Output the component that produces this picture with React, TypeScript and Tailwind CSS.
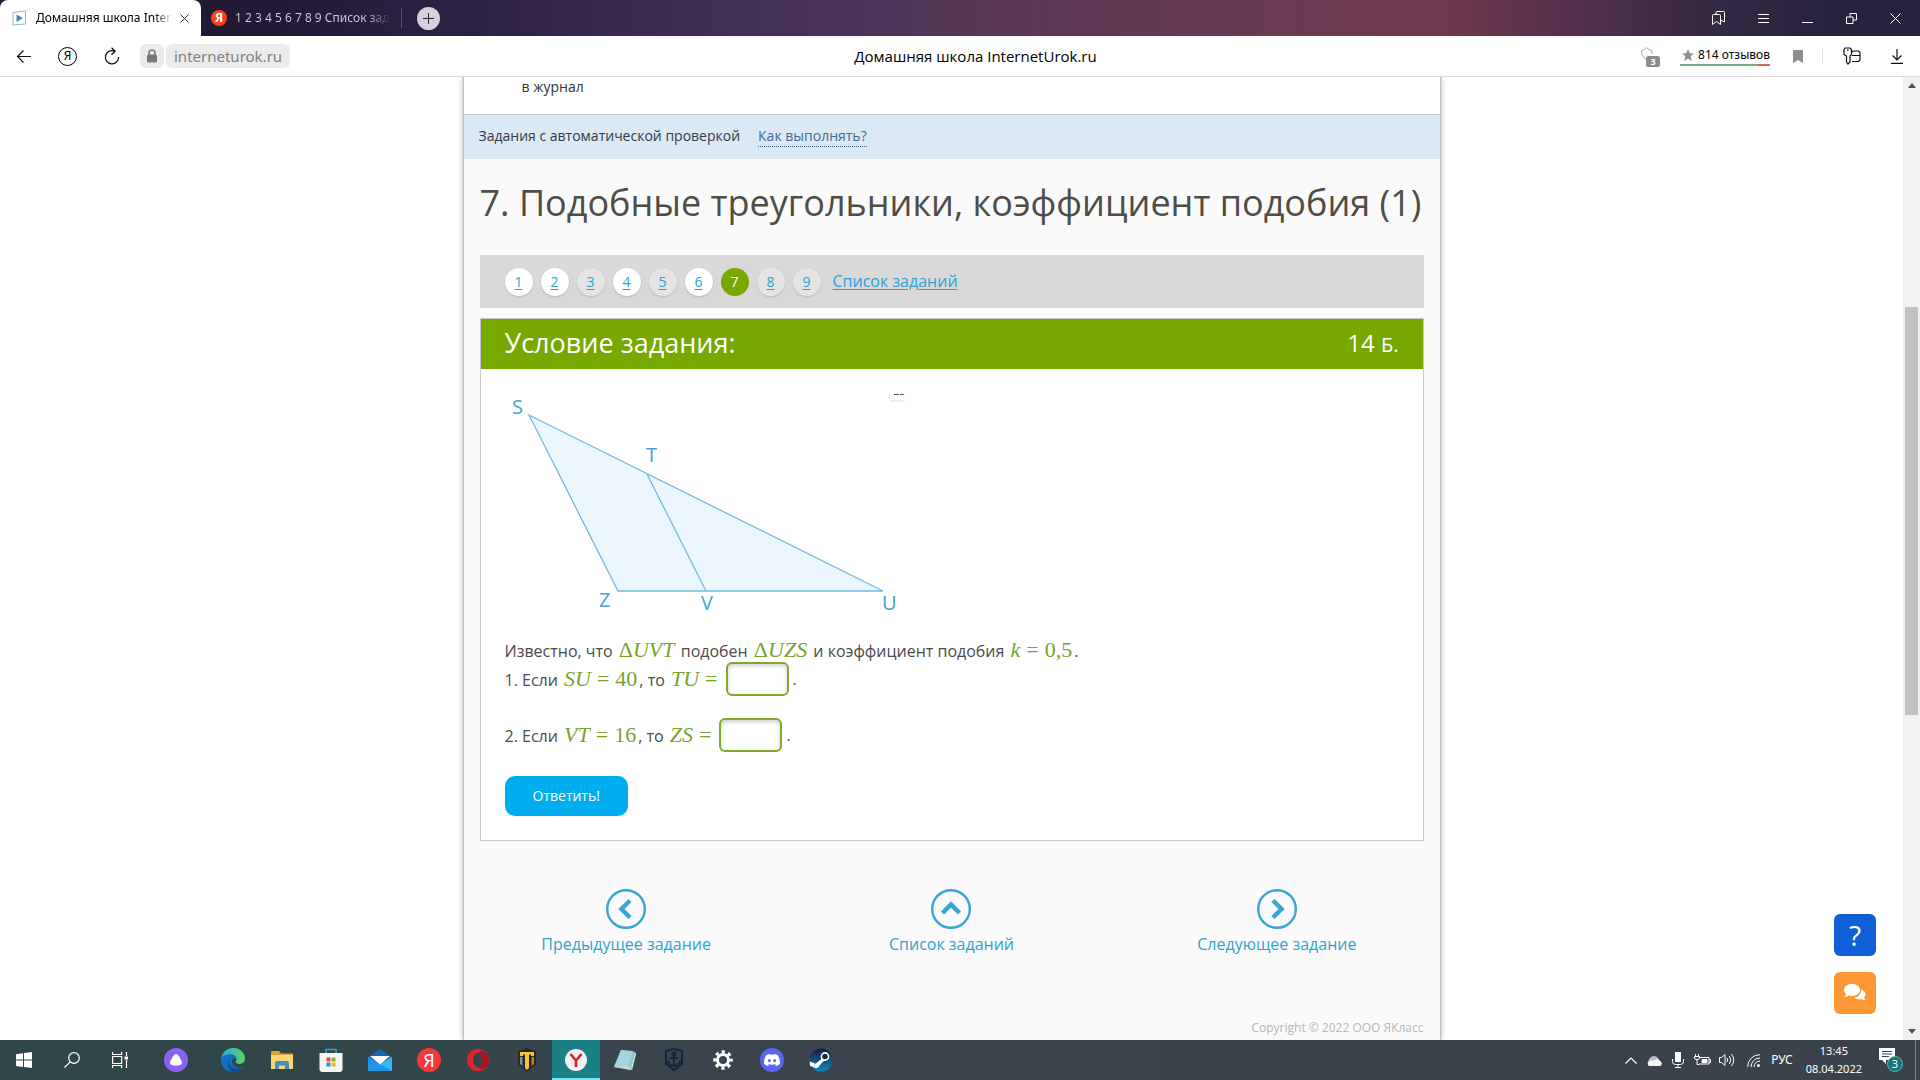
import type { ReactNode } from 'react'
import { SiDiscord } from 'react-icons/si'

const SANS = "font-['Open_Sans','Noto_Sans',sans-serif]"
const UI = "font-['Noto_Sans','Open_Sans',sans-serif]"

/* ---------- Browser window ---------- */

function TabStrip() {
    return (
        <div className="flex h-9 shrink-0 items-stretch bg-[linear-gradient(90deg,#1e1730_0%,#231a36_15%,#2c2142_24%,#3b2a50_33%,#48345a_44%,#5a3853_53%,#693a52_66%,#70384f_75%,#53304a_82%,#382a45_88%,#28223c_95%,#28223c_100%)] text-white">
            <div className="flex w-[201px] items-center gap-2 rounded-t-lg bg-white pr-3 pl-3 text-black">
                <svg viewBox="0 0 16 16" className="size-4 shrink-0">
                    <path d="M1 2.5 13.5 1v13L1 15z" fill="#fff" stroke="#8fb9d3" />
                    <path d="M4.500 4.500v7.500l6.500-4z" fill="#4a86ae" />
                </svg>
                <span className="flex-1 overflow-hidden bg-linear-to-r from-black from-85% to-white bg-clip-text text-xs whitespace-nowrap text-transparent">
                    Домашняя школа InternetUrok
                </span>
                <button aria-label="Закрыть вкладку">
                    <svg viewBox="0 0 10 10" className="size-[9px]" stroke="#222" fill="none">
                        <path d="M.5.5l9 9M9.500.500l-9 9" />
                    </svg>
                </button>
            </div>
            <div className="flex w-[200px] items-center gap-2 pl-[10px] text-xs">
                <span className="flex size-4 shrink-0 items-center justify-center rounded-full bg-[#fc3f1d] text-xs font-bold">Я</span>
                <span className="w-[155px] overflow-hidden bg-linear-to-r from-[#d3cdda] from-85% to-transparent bg-clip-text whitespace-nowrap text-transparent">
                    1 2 3 4 5 6 7 8 9 Список заданий
                </span>
            </div>
            <div className="flex items-center">
                <span className="h-5 w-px bg-[#5a5068]" />
                <button aria-label="Новая вкладка" className="ml-[15px] flex size-[23px] items-center justify-center rounded-full bg-[#d6d0da]">
                    <svg viewBox="0 0 11 11" className="size-[11px]" stroke="#2a2038">
                        <path d="M5.500 0v11M0 5.500h11" />
                    </svg>
                </button>
            </div>
            <div className="ml-auto flex items-center gap-[33px] pr-[19px]">
                <button aria-label="Закладки">
                    <svg viewBox="0 0 13 14" className="h-[14px] w-[13px]" fill="none" stroke="#fff">
                        <path d="M.5 4.500q0-1 1-1h6q1 0 1 1v9l-4-3-4 3zM4 3V1.500q0-1 1-1h6.500q1 0 1 1V11l-4-2" />
                    </svg>
                </button>
                <button aria-label="Меню">
                    <svg viewBox="0 0 11 11" className="size-[11px]" stroke="#fff">
                        <path d="M0 1.500h11M0 5.500h11M0 9.500h11" />
                    </svg>
                </button>
                <button aria-label="Свернуть">
                    <svg viewBox="0 0 11 11" className="size-[11px]" stroke="#fff">
                        <path d="M0 9.500h11" />
                    </svg>
                </button>
                <button aria-label="Развернуть">
                    <svg viewBox="0 0 11 11" className="size-[11px]" fill="none" stroke="#fff">
                        <path d="M.5 4h6.500v6.500H.5zM4 4V.5h6.500V7H7" />
                    </svg>
                </button>
                <button aria-label="Закрыть">
                    <svg viewBox="0 0 11 11" className="size-[11px]" stroke="#fff">
                        <path d="M.5.500l10 10M10.500.500l-10 10" />
                    </svg>
                </button>
            </div>
        </div>
    )
}

function AddressBar() {
    return (
        <div className="grid h-[41px] shrink-0 grid-cols-[1fr_auto_1fr] items-center border-b border-[#dcdcdc] bg-white pr-[17px] pl-4">
            <div className="flex items-center">
                <button aria-label="Назад">
                    <svg viewBox="0 0 16 16" className="size-4" fill="none" stroke="#111" strokeWidth="1.200">
                        <path d="M15 8.500H1.500M7.500 2.500l-6 6 6 6" />
                    </svg>
                </button>
                <button aria-label="Яндекс" className="ml-[26px] flex size-[19px] items-center justify-center rounded-full border border-black text-xs">
                    Я
                </button>
                <button aria-label="Обновить" className="ml-[27px]">
                    <svg viewBox="0 0 16 18" className="h-[18px] w-4" fill="none" stroke="#111" strokeWidth="1.300">
                        <path d="M10.500 4.200A6.600 6.600 0 1 0 14.600 10M7.500.800l3.600 3.400-3.600 3.600" />
                    </svg>
                </button>
                <span className="ml-5 flex h-6 w-6 items-center justify-center rounded-md bg-[#ebebeb]">
                    <svg viewBox="0 0 12 14" className="h-[14px] w-3">
                        <path d="M3 6V4a3 3 0 0 1 6 0v2" fill="none" stroke="#777" strokeWidth="1.500" />
                        <rect x="1" y="5.500" width="10" height="8" rx="1.500" fill="#777" />
                    </svg>
                </span>
                <span className="ml-[2px] flex h-6 items-center rounded-md bg-[#ebebeb] px-2 text-[15px] text-[#808080]">interneturok.ru</span>
            </div>
            <span className={`ml-8 text-[15px] text-black ${SANS}`}>Домашняя школа InternetUrok.ru</span>
            <div className="flex items-center justify-end">
                <svg viewBox="0 0 20 21" className="h-[21px] w-5">
                    <path d="M9 14.500C4 13 1.500 9 1.500 4.500 3.500 4.300 5 3 6.500 1.500 8 3 10 4.300 12 4.500V8" fill="none" stroke="#a8a8a8" />
                    <rect x="6" y="10" width="14" height="11" rx="2.500" fill="#8b8b8b" />
                    <text x="13" y="19" fontSize="9" fontWeight="bold" textAnchor="middle" fill="#fff">3</text>
                </svg>
                <a href="#reviews" className="ml-5 flex flex-col whitespace-nowrap">
                    <span className="flex items-center gap-1 pl-[2px] text-xs leading-[18px]">
                        <svg viewBox="0 0 24 24" className="size-3" fill="#8a8f94">
                            <path d="M12 0l3.500 8.500 8.500.500-6.700 5.700L19.500 24 12 18.800 4.500 24l2.200-9.300L0 9l8.500-.5z" />
                        </svg>
                        814 отзывов
                    </span>
                    <span className="flex h-[2px]">
                        <span className="w-[87%] bg-[#6fae86]" />
                        <span className="flex-1 bg-[#d9675a]" />
                    </span>
                </a>
                <svg viewBox="0 0 10 13" className="ml-[23px] h-[13px] w-[10px]" fill="#8e8e8e">
                    <path d="M0 1q0-1 1-1h8q1 0 1 1v12L5 10l-5 3z" />
                </svg>
                <span className="ml-[19px] h-4 w-px bg-[#dedede]" />
                <button aria-label="Пароли" className="ml-5">
                    <svg viewBox="0 0 18 18" className="size-[18px]" fill="none" stroke="#111" strokeWidth="1.200">
                        <path d="M2 1h5l1.500 1.500v5L7 9v6l-2 2-1.500-2V9L1 7.500v-5zM4 3.200h1.500M9 5l1-1h5.500l1.500 1.500V13l-1.500 1.500H9M9 8.500h8" />
                    </svg>
                </button>
                <button aria-label="Загрузки" className="ml-[30px]">
                    <svg viewBox="0 0 12 15" className="h-[15px] w-3" fill="none" stroke="#111" strokeWidth="1.200">
                        <path d="M6 0v11M1.500 6.500L6 11l4.500-4.500M0 14.300h12" />
                    </svg>
                </button>
            </div>
        </div>
    )
}

function Scrollbar() {
    return (
        <div className="flex w-[17px] shrink-0 flex-col items-center bg-[#f1f1f1] py-[6px]">
            <svg viewBox="0 0 8 5" className="h-[5px] w-2" fill="#505050">
                <path d="M0 5l4-5 4 5z" />
            </svg>
            <div className="grow-[219]" />
            <div className="w-[13px] grow-[408] bg-[#c1c1c1]" />
            <div className="grow-[314]" />
            <svg viewBox="0 0 8 5" className="h-[5px] w-2" fill="#505050">
                <path d="M0 0l4 5 4-5z" />
            </svg>
        </div>
    )
}

/* ---------- Page ---------- */

const tasks = [
    { n: 1, done: true },
    { n: 2, done: true },
    { n: 3, done: false },
    { n: 4, done: true },
    { n: 5, done: false },
    { n: 6, done: true },
    { n: 7, current: true },
    { n: 8, done: false },
    { n: 9, done: false },
]

function TaskPager() {
    return (
        <nav className="flex h-[53px] items-center gap-2 bg-[#d9d9d9] px-[25px] text-[#2e9fd4]">
            {tasks.map((t) =>
                t.current ? (
                    <span key={t.n} className="flex size-7 items-center justify-center rounded-full bg-[#76a800] text-sm text-white">
                        {t.n}
                    </span>
                ) : (
                    <a
                        key={t.n}
                        href={`#task-${t.n}`}
                        className={`flex size-7 items-center justify-center rounded-full text-sm underline underline-offset-2 shadow-[0_1px_2px_rgba(0,0,0,0.15)] ${t.done ? 'bg-white' : 'bg-[#e4e4e4]'}`}
                    >
                        {t.n}
                    </a>
                ),
            )}
            <a href="#list" className="ml-1 pb-[2px] text-base underline underline-offset-2">
                Список заданий
            </a>
        </nav>
    )
}

function Triangle() {
    return (
        <svg viewBox="0 -4 400 224" className="h-[224px] w-[400px]" role="img" aria-label="Треугольник SUZ">
            <path d="M24 20L378 196H113z" fill="#ebf7fc" stroke="#6fbbe2" strokeWidth="1.300" />
            <path d="M142 79l59 117" stroke="#6fbbe2" strokeWidth="1.300" />
            <g fontSize="20" fill="#45a3d9">
                <text x="7" y="19">S</text>
                <text x="141" y="67">T</text>
                <text x="94" y="212">Z</text>
                <text x="196" y="215">V</text>
                <text x="377" y="215">U</text>
            </g>
        </svg>
    )
}

function M({ children }: { children: ReactNode }) {
    return <span className="mx-[2px] font-['Liberation_Serif',serif] text-[22px] leading-none text-[#76a32a]">{children}</span>
}

function Eq() {
    return <span className="mx-[6px]">=</span>
}

function Answer({ label }: { label: string }) {
    return (
        <input
            type="text"
            aria-label={label}
            className="mr-1 h-[34px] w-[63px] rounded-md border-2 border-[#7fa82c] bg-white px-2 text-center shadow-[inset_0_2px_4px_rgba(0,0,0,0.2)]"
        />
    )
}

function TaskPanel() {
    return (
        <section className="mt-[10px] border border-[#c8c8c8] bg-white">
            <header className="flex h-[50px] items-center justify-between bg-[#76a800] px-6 pb-[2px] text-white">
                <h2 className="text-[27px]">Условие задания:</h2>
                <span className="text-2xl">
                    14 <span className="text-xl">Б.</span>
                </span>
            </header>
            <div className="px-6 pt-[22px] pb-6 text-base text-[#4b4b4b]">
                <div className="flex items-start">
                    <Triangle />
                    <svg viewBox="0 0 16 12" className="-ml-4 h-3 w-4" fill="none">
                        <path d="M5 3.500h5M11 3.500h4" stroke="#555" />
                        <path d="M.5 3v5q0 2 2 2H14q2 0 2-2" stroke="#dddddd" />
                    </svg>
                </div>
                <p className="mt-6 leading-[22px]">
                    Известно, что <M>Δ<i>UVT</i></M> подобен <M>Δ<i>UZS</i></M> и коэффициент подобия <M><i>k</i><Eq />0,5</M>.
                </p>
                <div className="flex items-center">
                    <p className="leading-[22px]">
                        1. Если <M><i>SU</i><Eq />40</M>, то <M><i>TU</i><Eq /></M>
                    </p>
                    <Answer label="TU" />.
                </div>
                <div className="mt-[22px] flex items-center">
                    <p className="leading-[22px]">
                        2. Если <M><i>VT</i><Eq />16</M>, то <M><i>ZS</i><Eq /></M>
                    </p>
                    <Answer label="ZS" />.
                </div>
                <button className="mt-6 block h-10 rounded-[10px] bg-[#00aeef] px-7 text-sm text-white">Ответить!</button>
            </div>
        </section>
    )
}

function NavLink({ href, label, path }: { href: string; label: string; path: string }) {
    return (
        <a href={href} className="flex flex-1 flex-col items-center gap-[3px] text-base text-[#2ea3cf]">
            <svg viewBox="0 0 40 40" className="size-10" fill="none" stroke="#38a5d6">
                <circle cx="20" cy="20" r="18.800" strokeWidth="2.400" />
                <path d={path} strokeWidth="4.500" />
            </svg>
            {label}
        </a>
    )
}

function LessonPage() {
    return (
        <main className="mx-auto flex w-[978px] flex-col border-x border-[#c3c3c3] bg-[#fafafa] shadow-[0_0_5px_rgba(0,0,0,0.3)]">
            <div className="h-[37px] bg-white pl-[58px] text-sm leading-5 text-[#333]">в журнал</div>
            <div className="flex h-[45px] items-center gap-[18px] border-t border-[#c3ced8] bg-[#dbe9f5] px-[15px] pb-[2px] text-sm text-[#2f3a4c]">
                <span>Задания с автоматической проверкой</span>
                <a href="#help" className="border-b border-dotted border-[#3f6696] text-[#41689b]">Как выполнять?</a>
            </div>
            <div className="px-4">
                <h1 className="pt-5 pb-7 text-4xl leading-[48px] whitespace-nowrap text-[#4e4e46]">
                    7. Подобные треугольники, коэффициент подобия (1)
                </h1>
                <TaskPager />
                <TaskPanel />
            </div>
            <div className="mt-12 flex">
                <NavLink href="#prev" label="Предыдущее задание" path="M24 11.500L15.500 20l8.500 8.500" />
                <NavLink href="#list" label="Список заданий" path="M11.500 24l8.500-8.500 8.500 8.500" />
                <NavLink href="#next" label="Следующее задание" path="M16 11.500l8.500 8.500-8.500 8.500" />
            </div>
            <div className="mt-auto px-4 text-right text-xs leading-6 text-[#b8b8b8]">Copyright © 2022 ООО ЯКласс</div>
        </main>
    )
}

function FloatingButtons() {
    return (
        <div className="absolute right-[27px] bottom-[26px] flex flex-col gap-4">
            <button aria-label="Помощь" className="flex size-[42px] items-center justify-center rounded-md bg-[#115fd8] text-[28px] text-white">
                ?
            </button>
            <button aria-label="Чат" className="flex size-[42px] items-center justify-center rounded-md bg-[#fd9735]">
                <svg viewBox="0 0 22 18" className="h-[18px] w-[22px]" fill="#fff">
                    <path d="M8 0c4.500 0 8 2.600 8 6s-3.500 6-8 6q-1.500 0-2.800-.4Q3 13 .3 13q1.400-1.300 1.700-3Q0 8.300 0 6c0-3.400 3.500-6 8-6z" />
                    <path d="M17 5.500c2.800.8 4.500 2.600 4.500 4.800q0 1.900-1.500 3.200.3 1.500 1.700 2.700-2.500 0-4.400-1.300-3.800 1-6.800-1.200C14.500 13 17.500 10 17 5.500z" />
                </svg>
            </button>
        </div>
    )
}

/* ---------- Taskbar ---------- */

function TaskbarItem({ label, active, children }: { label: string; active?: boolean; children: ReactNode }) {
    return (
        <button aria-label={label} className={`flex h-10 w-12 items-center justify-center ${active ? 'border-b-2 border-[#76e6f2] bg-[#1b7f86] pt-[2px]' : ''}`}>
            {children}
        </button>
    )
}

function Taskbar() {
    return (
        <footer className={`flex h-10 shrink-0 items-center bg-[linear-gradient(90deg,#2f4648_0%,#32464a_22%,#3a444c_34%,#3a424c_100%)] text-white ${UI}`}>
            <TaskbarItem label="Пуск">
                <svg viewBox="0 0 16 16" className="size-4" fill="#fff">
                    <path d="M0 2.200L7 1.200V7.600H0zM8 1.100L16 0v7.600H8zM0 8.500h7v6.400l-7-1zM8 8.500h8V16l-8-1.100z" />
                </svg>
            </TaskbarItem>
            <TaskbarItem label="Поиск">
                <svg viewBox="0 0 16 16" className="size-4" fill="none" stroke="#fff" strokeWidth="1.200">
                    <circle cx="10" cy="6" r="5.300" />
                    <path d="M6.200 9.800L.5 15.500" />
                </svg>
            </TaskbarItem>
            <TaskbarItem label="Представление задач">
                <svg viewBox="0 0 16 16" className="size-4" fill="none" stroke="#fff" strokeWidth="1.200">
                    <path d="M.6 0v2.500h9V0M.6 4.500h9v7h-9zM.6 16v-2.500h9V16M14.500 0v4M14.500 8v8" />
                    <path d="M12.500 6h3.500" strokeWidth="3" />
                </svg>
            </TaskbarItem>
            <div className="ml-2">
                <TaskbarItem label="Алиса">
                    <svg viewBox="0 0 24 24" className="size-6">
                        <circle cx="12" cy="12" r="12" fill="#8a63f5" />
                        <path d="M12 6c1.300 0 2.300 1 3 2.300l2.600 4.700c1.300 2.500 0 4.500-5.600 4.500S5.100 15.500 6.400 13L9 8.300C9.700 7 10.700 6 12 6z" fill="#fff" />
                    </svg>
                </TaskbarItem>
            </div>
            <div className="ml-[9px] flex gap-px">
                <TaskbarItem label="Edge">
                    <svg viewBox="0 0 24 24" className="size-6">
                        <defs>
                            <linearGradient id="edgeTop" x1="0" x2="1">
                                <stop offset="0" stopColor="#2aa7e0" />
                                <stop offset="1" stopColor="#5fd45c" />
                            </linearGradient>
                        </defs>
                        <circle cx="12" cy="12" r="12" fill="#1371c4" />
                        <path d="M.3 10C1.500 4 6.300 0 12.300 0 19 0 24 5 24 10.500c0 3.500-2.500 5.500-5.500 5.500-3 0-4-1.300-4-2.200 0-.8 1-1 1-3C15.500 8 12.500 6.300 9 6.300 5 6.300 1.500 8 .3 10z" fill="url(#edgeTop)" />
                        <path d="M9 9.500C6.500 13 8.500 20.500 15.500 20.500c3 0 5-1 6.500-2-1 2.300-4.500 5.500-9.500 5.500C6.500 23.500 5.500 13 9 9.500z" fill="#0c4f9a" />
                        <path d="M14.500 13.800c0 .9 1 2.200 4 2.200 2.500 0 4.500-1.300 5.200-3 .2 2-.5 4-1.700 5.500-5 2.500-11 0-11-4.500 0-2 1-3.500 2.500-4 1.300.3 2 1 2 1.800 0 1-1 1.200-1 2z" fill="#32464a" />
                    </svg>
                </TaskbarItem>
                <TaskbarItem label="Проводник">
                    <svg viewBox="0 0 22 18" className="h-[18px] w-[22px]">
                        <path d="M0 1q0-1 1-1h7l2 2.500h12V18H0z" fill="#e0a526" />
                        <path d="M0 4h22v14H0z" fill="#fbd871" />
                        <path d="M4 18v-6q0-2 2-2h10q2 0 2 2v6h-4v-3.500H8V18z" fill="#3f8fc4" />
                    </svg>
                </TaskbarItem>
                <TaskbarItem label="Microsoft Store">
                    <svg viewBox="0 0 24 24" className="size-6">
                        <path d="M7 6V1.500h10V6" fill="none" stroke="#2b9fdc" strokeWidth="1.600" />
                        <path d="M.5 5h23v16q0 3-3 3h-17q-3 0-3-3z" fill="#f5f5f5" />
                        <path d="M7.500 9.500h4v4h-4z" fill="#e8502b" />
                        <path d="M12.500 9.500h4v4h-4z" fill="#80b82c" />
                        <path d="M7.500 14.500h4v4h-4z" fill="#2496dc" />
                        <path d="M12.500 14.500h4v4h-4z" fill="#f6b71c" />
                    </svg>
                </TaskbarItem>
                <TaskbarItem label="Почта">
                    <svg viewBox="0 0 24 22" className="h-[22px] w-6">
                        <path d="M0 8l12-8 12 8v14H0z" fill="#1668b3" />
                        <path d="M0 8l12 8.500L0 22z" fill="#1f8fdc" />
                        <path d="M24 8L0 22h24z" fill="#37b6f3" />
                        <path d="M0 8l24 14H0z" fill="#1f95e3" />
                        <path d="M2 7h20l-10 8.500z" fill="#fff" />
                    </svg>
                </TaskbarItem>
                <TaskbarItem label="Яндекс">
                    <span className="flex size-6 items-center justify-center rounded-full bg-[#f8373b] text-lg leading-none">Я</span>
                </TaskbarItem>
                <TaskbarItem label="Opera">
                    <svg viewBox="0 0 24 24" className="size-6">
                        <path fillRule="evenodd" d="M12 1C5.500 1 1 6 1 12s4.500 11 11 11 11-5 11-11S18.500 1 12 1zm0 3.500c2.800 0 4.700 3.200 4.700 7.500s-1.900 7.500-4.700 7.500S7.300 16.300 7.300 12 9.200 4.500 12 4.500z" fill="#e3222c" />
                        <path d="M12 4.500c2-1.700 5-1.800 7.500.2 4.700 4 4.700 10.600 0 14.600-2.500 2-5.500 1.900-7.500.2 2.800 0 4.700-3.200 4.700-7.500S14.800 4.500 12 4.500z" fill="#a81420" />
                    </svg>
                </TaskbarItem>
                <TaskbarItem label="World of Tanks">
                    <svg viewBox="0 0 20 24" className="h-6 w-5">
                        <path d="M1 3l4-1 5-2 5 2 4 1v13l-9 8-9-8z" fill="#2c2620" />
                        <path d="M3 4h14v4h-3V6.500h-2V20l-2 2-2-2V6.500H6V8H3z" fill="#f2c238" />
                        <path d="M3 9h2.500v9L3 16z" fill="#7d93a8" />
                        <path d="M17 9h-2.500v9l2.500-2z" fill="#b98425" />
                    </svg>
                </TaskbarItem>
                <TaskbarItem label="Яндекс Браузер" active>
                    <svg viewBox="0 0 22 22" className="size-[22px]">
                        <circle cx="11" cy="11" r="11" fill="#f3f0f0" />
                        <path d="M5.500 5l5.500 6.500L16.500 5M11 11v7" fill="none" stroke="#d3222b" strokeWidth="2.600" />
                    </svg>
                </TaskbarItem>
                <TaskbarItem label="Блокнот">
                    <svg viewBox="0 0 24 22" className="h-[22px] w-6">
                        <path d="M8 1l14 2-4 18-17-3z" fill="#8cc9d4" />
                        <path d="M8 1l12 1-5 15L1 18z" fill="#a3d6de" />
                        <path d="M22 3l1 2-4 16-1-1z" fill="#e8eef0" />
                        <path d="M1 18l14-1 3 4z" fill="#d8d3c8" />
                    </svg>
                </TaskbarItem>
                <TaskbarItem label="World of Warships">
                    <svg viewBox="0 0 20 24" className="h-6 w-5" fill="none" stroke="#14253a" strokeWidth="2">
                        <path d="M2 3l8-2 8 2v13l-8 6-8-6z" />
                        <circle cx="10" cy="6" r="1.500" />
                        <path d="M10 7.500V19M6 10h8M4 12.500c0 3 2.500 5.500 6 5.500s6-2.500 6-5.500" />
                    </svg>
                </TaskbarItem>
                <TaskbarItem label="Параметры">
                    <svg viewBox="0 0 20 20" className="size-5" fill="none" stroke="#fff">
                        <circle cx="10" cy="10" r="5.500" strokeWidth="3" />
                        <circle cx="10" cy="10" r="8.300" strokeWidth="3" strokeDasharray="3.260 3.260" strokeDashoffset="1.630" />
                    </svg>
                </TaskbarItem>
                <TaskbarItem label="Discord">
                    <span className="flex size-6 items-center justify-center rounded-full bg-[#5865f2]">
                        <SiDiscord className="size-4" />
                    </span>
                </TaskbarItem>
                <TaskbarItem label="Steam">
                    <svg viewBox="0 0 24 24" className="size-6">
                        <defs>
                            <linearGradient id="steam" x1="0" y1="0" x2="0" y2="1">
                                <stop offset="0" stopColor="#111d3a" />
                                <stop offset="1" stopColor="#1587b8" />
                            </linearGradient>
                        </defs>
                        <circle cx="12" cy="12" r="11.500" fill="url(#steam)" />
                        <path d="M.7 13.500l6 2.300 5-4.300 3-5 4 4-5.500 4-3 3.500a3.200 3.200 0 0 1-5 1.500l-4.200-1.800z" fill="#fff" />
                        <circle cx="16" cy="8.500" r="3.600" fill="#1a2745" stroke="#fff" strokeWidth="1.600" />
                    </svg>
                </TaskbarItem>
            </div>
            <div className="ml-auto flex h-full items-center">
                <svg viewBox="0 0 12 7" className="h-[7px] w-3" fill="none" stroke="#fff" strokeWidth="1.200">
                    <path d="M.5 6.500L6 1l5.500 5.500" />
                </svg>
                <svg viewBox="0 0 17 11" className="ml-[9px] h-[11px] w-[17px]">
                    <path d="M4 9a4 4 0 0 1 0-6 5 5 0 0 1 8 0l2 3-4 3z" fill="#b9bfc4" />
                    <path d="M3 11a3 3 0 0 1 0-5q2-1.500 4 0l2-1.200q3-1.300 5 1.200a2.600 2.600 0 0 1 0 5z" fill="#f4f4f4" />
                </svg>
                <svg viewBox="0 0 12 16" className="ml-[9px] h-4 w-3" fill="none" stroke="#fff">
                    <rect x="3" y="0" width="6" height="10" fill="#fff" stroke="none" />
                    <path d="M.5 7v2.500q0 3 3 3h5q3 0 3-3V7M6 12.500v3M3 15.500h6" />
                </svg>
                <svg viewBox="0 0 17 12" className="ml-[10px] h-3 w-[17px]" fill="none" stroke="#fff">
                    <path d="M5.500 3.500h9.500v6.500H5M15.500 5.500h1v3h-1M1.500 0v2M4.500 0v2M.5 2.500h5V4q0 1.500-2.500 1.500Q.5 5.500.5 4zM3 5.500v5h2" />
                    <path d="M8 5.500h5v3H8z" fill="#fff" />
                </svg>
                <svg viewBox="0 0 16 14" className="ml-2 h-[14px] w-4" fill="none" stroke="#fff">
                    <path d="M.5 4.500h2L6 1.500v11l-3.500-3h-2zM8 5q1.500 2 0 4M10.300 3q3 4 0 8M12.500 1q4.500 6 0 12" />
                </svg>
                <svg viewBox="0 0 13 13" className="ml-3 size-[13px]" fill="none" stroke="#fff">
                    <path d="M.7 13A12 12 0 0 1 13 .7M4 13a9 9 0 0 1 9-9M7 13a6 6 0 0 1 6-6" />
                    <circle cx="11.500" cy="11.500" r="1.500" fill="#fff" stroke="none" />
                </svg>
                <span className="ml-[11px] text-xs">РУС</span>
                <div className="ml-[13px] text-center text-[11px] leading-[18px]">
                    <div>13:45</div>
                    <div>08.04.2022</div>
                </div>
                <svg viewBox="0 0 24 24" className="ml-[17px] size-6">
                    <path d="M0 0h16v12H7v4l-4-4H0z" fill="#fff" />
                    <path d="M3 3.500h10M3 6h10M3 8.500h7" stroke="#3a424c" />
                    <circle cx="16" cy="16" r="7.500" fill="#14747a" stroke="#6fa9ac" />
                    <text x="16" y="20" fontSize="11" textAnchor="middle" fill="#fff">3</text>
                </svg>
                <span className="mr-1 ml-3 h-full w-px bg-[#79808a]" />
            </div>
        </footer>
    )
}

export default function App() {
    return (
        <div className={`flex h-screen flex-col overflow-hidden bg-white ${SANS}`}>
            <div className={UI}>
                <TabStrip />
                <AddressBar />
            </div>
            <div className="flex min-h-0 flex-1">
                <div className="relative flex min-w-0 flex-1 overflow-hidden">
                    <LessonPage />
                    <FloatingButtons />
                </div>
                <Scrollbar />
            </div>
            <Taskbar />
        </div>
    )
}
